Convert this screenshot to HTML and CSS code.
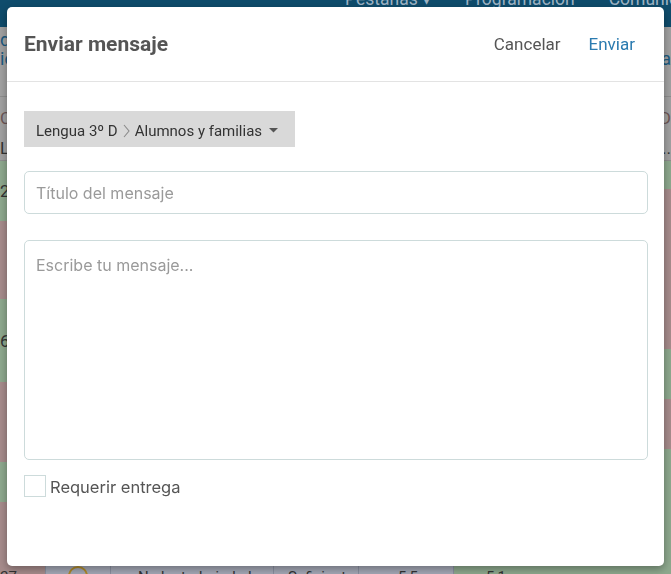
FILE: index.html
```html
<!DOCTYPE html>
<html lang="es">
<head>
  <meta charset="UTF-8">
  <meta name="viewport" content="width=device-width, initial-scale=1.0">
  <title>Enviar mensaje</title>
  <link rel="stylesheet" href="styles.css">
</head>
<body>

<!-- page behind the dialog (already dimmed) -->
<div class="page">
  <div class="topnav">
    <span class="nav-item">Pestañas &#9662;</span>
    <span class="nav-item">Programación</span>
    <span class="nav-item">Comunicación</span>
  </div>

  <div class="subbar">
    <div class="sub-left"><span class="link">d</span><span class="link">ic</span></div>
    <div class="sub-right"><span class="link">&nbsp;</span><span class="link">na</span></div>
  </div>

  <div class="tabs">
    <div class="tab-left"><span class="tab-a">C</span><span class="tab-b">L</span></div>
    <div class="tab-right"><span class="tab-a">D</span><span class="tab-b">...</span></div>
  </div>

  <div class="rows">
    <div class="col col-left">
      <div class="cell green h60">2</div>
      <div class="cell pink h78"></div>
      <div class="cell green h83">6</div>
      <div class="cell pink h80"></div>
      <div class="cell green h40"></div>
      <div class="cell pink h63"></div>
    </div>
    <div class="col col-right">
      <div class="cell green h28"></div>
      <div class="cell pink h160"></div>
      <div class="cell green h50"></div>
      <div class="cell pink h50"></div>
      <div class="cell green h116"></div>
    </div>
  </div>

  <div class="tablerow">
    <div class="td td-num">27</div>
    <div class="td td-icon"><span class="smiley"></span></div>
    <div class="td td-text">No ha trabajado lo</div>
    <div class="td td-grade">Suficiente</div>
    <div class="td td-score">5,5</div>
    <div class="td td-final">5,1</div>
  </div>
</div>

<!-- dialog -->
<div class="backdrop">
  <div class="modal">
    <div class="modal-header">
      <h2 class="modal-title">Enviar mensaje</h2>
      <div class="modal-actions">
        <a class="btn-link">Cancelar</a>
        <a class="btn-link primary">Enviar</a>
      </div>
    </div>

    <div class="modal-body">
      <button class="recipient">
        Lengua 3º D
        <svg class="chevron" width="7" height="14" viewBox="0 0 7 14"><path d="M1 1 L6 7 L1 13" fill="none" stroke="#8a8a8a" stroke-width="1.1"/></svg>
        Alumnos y familias
        <svg class="caret" width="9" height="5" viewBox="0 0 9 5"><path d="M0 0 H9 L4.5 4.5 Z" fill="#555"/></svg>
      </button>

      <input class="field" type="text" placeholder="Título del mensaje">
      <textarea class="field area" placeholder="Escribe tu mensaje..."></textarea>

      <label class="check">
        <span class="box"></span>
        <span class="check-text">Requerir entrega</span>
      </label>
    </div>
  </div>
</div>

</body>
</html>
```

FILE: styles.css
```css
* {
  box-sizing: border-box;
}
body {
  margin: 0;
  font-family: Roboto, "Liberation Sans", sans-serif;
  overflow: hidden;
  height: 574px;
}

/* background page */
.page {
  height: 574px;
  background-color: #a2a2a2;
}
.topnav {
  height: 27px;
  background-color: #0f4c6c;
  display: flex;
  padding-left: 345px;
  gap: 34px;
  overflow: hidden;
  white-space: nowrap;
}
.nav-item {
  color: #9fb4c4;
  font-size: 17.5px;
  line-height: 16px;
  margin-top: -9px;
}
.subbar {
  height: 70px;
  display: flex;
  justify-content: space-between;
  border-bottom: 1px solid #8e8e8e;
}
.sub-left, .sub-right {
  display: flex;
  flex-direction: column;
  padding-top: 4px;
  gap: 2px;
  font-size: 18px;
  line-height: 17px;
}
.sub-right {
  align-items: flex-end;
}
.link {
  color: #1c5a80;
}
.tabs {
  height: 64px;
  display: flex;
  justify-content: space-between;
  border-bottom: 1px solid #8e8e8e;
}
.tab-left, .tab-right {
  display: flex;
  flex-direction: column;
  gap: 12px;
  padding-top: 12px;
  font-size: 17px;
  line-height: 18px;
}
.tab-right {
  align-items: flex-end;
}
.tab-a {
  color: #6d5656;
}
.tab-b {
  color: #333;
}
.rows {
  display: flex;
  justify-content: space-between;
  height: 404px;
}
.col-left {
  width: 45px;
}
.col-right {
  width: 60px;
}
.cell {
  font-size: 17px;
  color: #333;
  display: flex;
  align-items: center;
}
.green { background-color: #8ea98e; }
.pink { background-color: #a78c8c; }
.h28 { height: 28px; }
.h40 { height: 40px; }
.h50 { height: 50px; }
.h60 { height: 60px; }
.h63 { height: 63px; }
.h78 { height: 78px; }
.h80 { height: 80px; }
.h83 { height: 83px; }
.h116 { height: 116px; }
.h160 { height: 160px; }

.tablerow {
  display: flex;
  height: 30px;
  font-size: 15px;
  color: #333;
}
.td {
  background-color: #a4a8b6;
  border-left: 1px solid #8a90a0;
  padding-top: 4px;
  line-height: 16px;
  white-space: nowrap;
  overflow: hidden;
}
.td-num { width: 45px; background-color: #a78c8c; border-left: none; }
.td-icon { width: 65px; padding-left: 22px; padding-top: 0; }
.td-text { width: 163px; padding-left: 27px; }
.td-grade { width: 85px; padding-left: 14px; }
.td-score { width: 95px; padding-left: 39px; }
.td-final { flex: 1; padding-left: 32px; background-color: #8ea98e; }
.smiley {
  display: block;
  width: 20px;
  height: 20px;
  margin-top: 1px;
  border: 2px solid #b08a2a;
  border-radius: 50%;
}

/* dialog */
.backdrop {
  position: fixed;
  top: 0;
  left: 0;
  right: 0;
  bottom: 0;
  padding: 7px 7px 8px 7px;
}
.modal {
  width: 657px;
  height: 559px;
  background-color: #fff;
  border-radius: 5px;
  box-shadow: 0 3px 9px rgba(0, 0, 0, 0.35);
}
.modal-header {
  height: 75px;
  border-bottom: 1px solid #e3e3e3;
  display: flex;
  align-items: center;
  justify-content: space-between;
  padding: 0 29px 1px 17px;
}
.modal-title {
  margin: 0;
  font-size: 21px;
  font-weight: bold;
  color: #555;
}
.modal-actions {
  display: flex;
  gap: 28px;
}
.btn-link {
  font-size: 17px;
  color: #555;
  cursor: pointer;
}
.btn-link.primary {
  color: #2b7bb0;
}
.modal-body {
  padding: 29px 16px 0 17px;
  display: flex;
  flex-direction: column;
  align-items: flex-start;
}
.recipient {
  height: 36px;
  width: 271px;
  background-color: #d9d9d9;
  border: none;
  border-radius: 0;
  padding: 3px 12px 0 12px;
  display: flex;
  align-items: center;
  font-family: Roboto, "Liberation Sans", sans-serif;
  font-size: 15px;
  color: #333;
  white-space: nowrap;
}
.chevron {
  margin: 0 5px 0 5px;
}
.caret {
  margin-left: 7px;
}
.field {
  width: 624px;
  margin-top: 24px;
  border: 1px solid #cddbdb;
  border-radius: 5px;
  padding: 0 11px;
  font-family: Inter, "Noto Sans", sans-serif;
  font-size: 16px;
  color: #333;
  outline: none;
}
input.field {
  height: 43px;
}
.area {
  height: 220px;
  margin-top: 26px;
  padding-top: 14px;
  resize: none;
}
.field::placeholder {
  color: #9a9a9a;
}
.check {
  margin-top: 14px;
  display: flex;
  align-items: center;
  gap: 4px;
  font-family: Inter, "Noto Sans", sans-serif;
  font-size: 16.5px;
  color: #555;
}
.check-text {
  padding-top: 3px;
}
.box {
  width: 22px;
  height: 22px;
  border: 1px solid #cddbdb;
}
```
